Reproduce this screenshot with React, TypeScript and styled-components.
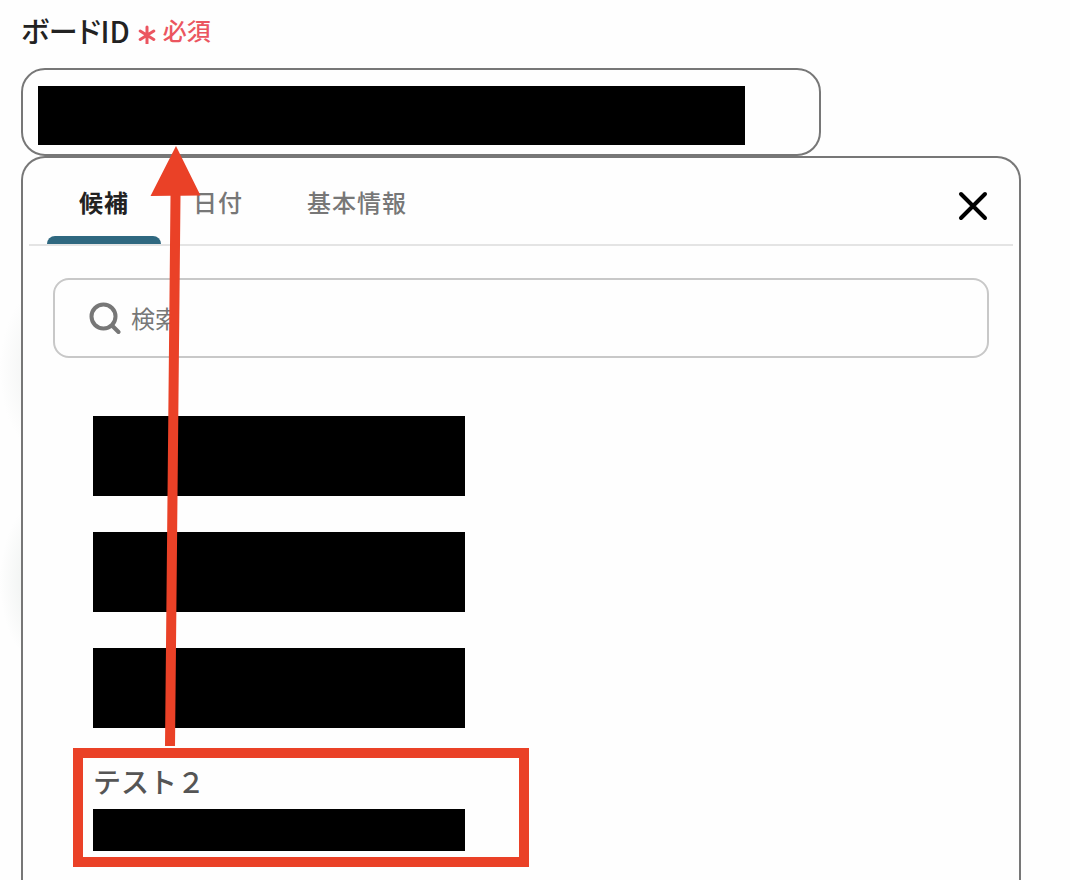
import React, { useState } from "react";
import styled, { createGlobalStyle } from "styled-components";

const GlobalStyle = createGlobalStyle`
  *, *::before, *::after { box-sizing: border-box; }
  body {
    margin: 0;
    background: #fefefe;
    color: #222;
    font-family: "Noto Sans CJK JP", "Noto Sans", sans-serif;
  }
  button, input { font: inherit; color: inherit; }
`;

const Page = styled.main`
  position: relative;
  display: flex;
  flex-direction: column;
  min-height: 100vh;
  padding: 10px 49px 0 21px;
  overflow: hidden;
`;

const LabelRow = styled.div`
  display: flex;
  align-items: center;
  height: 40px;
  margin-bottom: 18px;
`;

const FieldLabel = styled.label`
  font-size: 29px;
  line-height: 40px;
  font-weight: 500;
  font-feature-settings: "palt";
`;

const Required = styled.span`
  display: flex;
  align-items: center;
  gap: 6px;
  margin-left: 7px;
  color: #eb5560;
  font-size: 24px;
  line-height: 40px;
  font-weight: 500;
`;

const FieldBox = styled.div`
  width: 80%;
  padding: 16px 74px 9px 15px;
  border: 2px solid #777;
  border-radius: 24px;
  background: #fefefe;
`;

const MaskedInput = styled.input`
  display: block;
  width: 100%;
  height: 59px;
  padding: 0 8px;
  border: 0;
  border-radius: 0;
  outline: 0;
  background: #000;
`;

const Panel = styled.section`
  position: relative;
  flex: 1;
  padding: 0 6px 12px;
  border: 2px solid #777;
  border-bottom: 0;
  border-radius: 24px 24px 0 0;
  background: #fefefe;
`;

const Shade = styled.div<{ $top: number; $color: string }>`
  position: absolute;
  top: ${(p) => p.$top}px;
  left: 0;
  width: 80px;
  height: 160px;
  background: radial-gradient(closest-side, ${(p) => p.$color}, #fefefe);
`;

const TabBar = styled.div`
  display: flex;
  align-items: stretch;
  height: 88px;
  padding: 0 18px;
  border-bottom: 2px solid #e4e4e4;
`;

const TabList = styled.div`
  display: flex;
  flex: 1;
`;

const Tab = styled.button<{ $active: boolean }>`
  display: flex;
  flex-direction: column;
  justify-content: space-between;
  padding: 0;
  border: 0;
  background: none;
  color: ${(p) => (p.$active ? "#222" : "#777")};
  font-size: 24px;
  line-height: 36px;
  font-weight: ${(p) => (p.$active ? 700 : 500)};
  letter-spacing: 1px;
  cursor: pointer;

  &::after {
    content: "";
    width: 100%;
    height: 8px;
    border-radius: 8px 8px 0 0;
    background: ${(p) => (p.$active ? "#2f6880" : "transparent")};
  }
`;

const TabText = styled.span`
  padding: 26px 32px 0;
`;

const CloseButton = styled.button`
  align-self: center;
  display: flex;
  padding: 6px;
  margin-top: 10px;
  border: 0;
  background: none;
  color: #000;
  cursor: pointer;
`;

const SearchBox = styled.label`
  display: flex;
  align-items: center;
  gap: 10px;
  height: 80px;
  margin: 32px 24px 0;
  padding: 0 32px;
  border: 2px solid #c8c8c8;
  border-radius: 16px;
  color: #777;
`;

const SearchInput = styled.input`
  flex: 1;
  min-width: 0;
  padding: 0;
  border: 0;
  outline: 0;
  background: none;
  font-size: 24px;
  line-height: 36px;

  &::placeholder { color: #777; opacity: 1; }
`;

const Options = styled.ul`
  display: flex;
  flex-direction: column;
  gap: 36px;
  margin: 58px 0 0;
  padding: 0 44px 0 64px;
  list-style: none;
`;

const Option = styled.li`
  position: relative;
`;

const OptionButton = styled.button`
  display: flex;
  flex-direction: column;
  width: 100%;
  padding: 0;
  border: 0;
  background: none;
  color: #555;
  text-align: left;
  cursor: pointer;
`;

const OptionTitle = styled.span`
  height: 45px;
  font-size: 28px;
  line-height: 35px;
  font-weight: 500;
`;

const Mask = styled.span<{ $height: number }>`
  width: 372px;
  max-width: 100%;
  height: ${(p) => p.$height}px;
  background: #000;
`;

const Highlight = styled.div`
  position: absolute;
  inset: -16px auto -16px -20px;
  width: 456px;
  border: 10px solid #ea4127;
  pointer-events: none;
`;

const Arrow = styled.svg`
  position: absolute;
  top: 146px;
  left: 150px;
  pointer-events: none;
`;

const tabs = ["候補", "日付", "基本情報"];
const options = [
  { id: 1, name: "候補 1", masked: true },
  { id: 2, name: "候補 2", masked: true },
  { id: 3, name: "候補 3", masked: true },
  { id: 4, name: "テスト２", masked: false },
];

export default function App() {
  const [active, setActive] = useState(tabs[0]);

  return (
    <Page>
      <GlobalStyle />
      <Shade $top={290} $color="#eff1f0" />
      <Shade $top={502} $color="#e9edeb" />
      <LabelRow>
        <FieldLabel htmlFor="board-id">ボードID</FieldLabel>
        <Required>
          <svg width="20" height="28" viewBox="0 0 20 28" fill="none" stroke="currentColor" strokeWidth="3" strokeLinecap="round" aria-hidden="true">
            <path d="M10 11V27.500M3.200 15L16.800 23.500M16.800 15L3.200 23.500" />
          </svg>
          必須
        </Required>
      </LabelRow>
      <FieldBox>
        <MaskedInput id="board-id" type="text" />
      </FieldBox>
      <Panel>
        <TabBar>
          <TabList role="tablist">
            {tabs.map((tab) => (
              <Tab key={tab} role="tab" aria-selected={tab === active} $active={tab === active} onClick={() => setActive(tab)}>
                <TabText>{tab}</TabText>
              </Tab>
            ))}
          </TabList>
          <CloseButton aria-label="閉じる">
            <svg width="32" height="32" viewBox="0 0 32 32" fill="none" stroke="currentColor" strokeWidth="4" strokeLinecap="round">
              <path d="M4 4L28 28M28 4L4 28" />
            </svg>
          </CloseButton>
        </TabBar>
        <SearchBox>
          <svg width="34" height="34" viewBox="0 0 34 34" fill="none" stroke="currentColor" strokeWidth="4" strokeLinecap="round" aria-hidden="true">
            <circle cx="16.500" cy="15.500" r="12" />
            <path d="M25 24.500L31.500 31" />
          </svg>
          <SearchInput type="text" placeholder="検索" aria-label="検索" />
        </SearchBox>
        <Options>
          {options.map((o) => (
            <Option key={o.id}>
              <OptionButton aria-label={o.name}>
                {!o.masked && <OptionTitle>{o.name}</OptionTitle>}
                <Mask $height={o.masked ? 80 : 42} />
              </OptionButton>
              {!o.masked && <Highlight />}
            </Option>
          ))}
        </Options>
      </Panel>
      <Arrow width="52" height="602" viewBox="0 0 52 602" fill="#ea4127" aria-hidden="true">
        <path d="M26 0L50.500 49.500L30.500 49.700L25 600H15L20.500 49.800L.5 50Z" />
      </Arrow>
    </Page>
  );
}
